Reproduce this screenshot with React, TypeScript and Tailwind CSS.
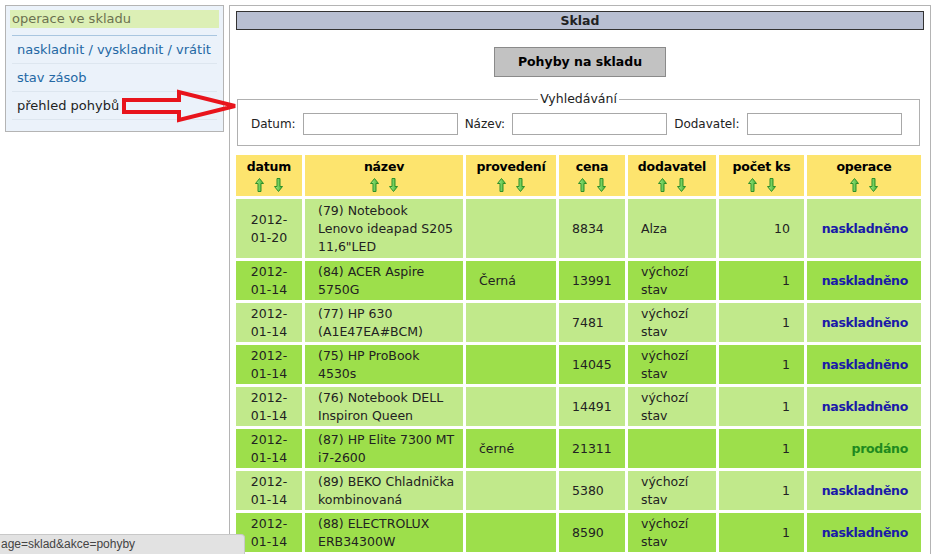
import React from 'react'

const font = { fontFamily: '"DejaVu Sans", Verdana, sans-serif' }

type Row = {
  datum: string[]
  nazev: string[]
  provedeni: string
  cena: string
  dodavatel: string[]
  pocet: string
  operace: 'naskladněno' | 'prodáno'
}

const rows: Row[] = [
  { datum: ['2012-', '01-20'], nazev: ['(79) Notebook', 'Lenovo ideapad S205', '11,6"LED'], provedeni: '', cena: '8834', dodavatel: ['Alza'], pocet: '10', operace: 'naskladněno' },
  { datum: ['2012-', '01-14'], nazev: ['(84) ACER Aspire', '5750G'], provedeni: 'Černá', cena: '13991', dodavatel: ['výchozí', 'stav'], pocet: '1', operace: 'naskladněno' },
  { datum: ['2012-', '01-14'], nazev: ['(77) HP 630', '(A1E47EA#BCM)'], provedeni: '', cena: '7481', dodavatel: ['výchozí', 'stav'], pocet: '1', operace: 'naskladněno' },
  { datum: ['2012-', '01-14'], nazev: ['(75) HP ProBook', '4530s'], provedeni: '', cena: '14045', dodavatel: ['výchozí', 'stav'], pocet: '1', operace: 'naskladněno' },
  { datum: ['2012-', '01-14'], nazev: ['(76) Notebook DELL', 'Inspiron Queen'], provedeni: '', cena: '14491', dodavatel: ['výchozí', 'stav'], pocet: '1', operace: 'naskladněno' },
  { datum: ['2012-', '01-14'], nazev: ['(87) HP Elite 7300 MT', 'i7-2600'], provedeni: 'černé', cena: '21311', dodavatel: [], pocet: '1', operace: 'prodáno' },
  { datum: ['2012-', '01-14'], nazev: ['(89) BEKO Chladnička', 'kombinovaná'], provedeni: '', cena: '5380', dodavatel: ['výchozí', 'stav'], pocet: '1', operace: 'naskladněno' },
  { datum: ['2012-', '01-14'], nazev: ['(88) ELECTROLUX', 'ERB34300W'], provedeni: '', cena: '8590', dodavatel: ['výchozí', 'stav'], pocet: '1', operace: 'naskladněno' },
  { datum: ['2012-', '01-14'], nazev: ['(90) ELECTROLUX', 'EWT 10120W'], provedeni: '', cena: '6290', dodavatel: ['výchozí', 'stav'], pocet: '1', operace: 'naskladněno' },
]

function SortArrow({ down }: { down?: boolean }) {
  const id = down ? 'gd' : 'gu'
  return (
    <svg width="9" height="14" viewBox="0 0 9 14">
      <defs>
        <linearGradient id={id} x1="0" y1="0" x2="1" y2="0">
          <stop offset="0" stopColor="#a8f08c" />
          <stop offset="1" stopColor="#3fae2f" />
        </linearGradient>
      </defs>
      <path
        d={down ? 'M4.5 13.5 L8.5 8.5 L6 8.5 L6 0.5 L3 0.5 L3 8.5 L0.5 8.5 Z' : 'M4.5 0.5 L8.5 5.5 L6 5.5 L6 13.5 L3 13.5 L3 5.5 L0.5 5.5 Z'}
        fill={`url(#${id})`}
        stroke="#2f8f2a"
        strokeWidth="1"
        strokeLinejoin="round"
      />
    </svg>
  )
}

function Th({ label }: { label: string }) {
  return (
    <th className="bg-[#fde46e] px-1 pt-[4px] pb-[4px] text-center align-top font-bold text-[12.5px] leading-[16px] tracking-[-0.2px] text-black">
      <div>{label}</div>
      <div className="mt-[3px] flex justify-center gap-[10px]">
        <SortArrow />
        <SortArrow down />
      </div>
    </th>
  )
}

export default function App() {
  return (
    <div className="relative min-h-[554px] bg-white text-[12px] text-[#222]" style={font}>
      <div className="flex items-start">
        {/* sidebar */}
        <div className="ml-[5px] mt-[5px] w-[219px] border border-[#b4b4b4] bg-[#ebf2fa] px-[4px] pt-[4px] pb-[11px] text-[13px]">
          <div className="bg-[#dcefb5] px-[2px] leading-[18px] text-[#6b7150]">operace ve skladu</div>
          <div className="mt-[7px] mx-[2px] border-t border-[#a9c6e0]" />
          <ul className="mx-[2px]">
            <li className="border-b border-[#dde6ef] pl-[5px] pt-[5px] pb-[4px] leading-[18px] text-[#2468a4]">naskladnit / vyskladnit / vrátit</li>
            <li className="border-b border-[#dde6ef] pl-[5px] pt-[5px] pb-[4px] leading-[18px] text-[#2468a4]">stav zásob</li>
            <li className="border-b border-[#dde6ef] pl-[5px] pt-[5px] pb-[4px] leading-[18px] text-[#222]">přehled pohybů</li>
          </ul>
        </div>

        {/* main */}
        <div className="ml-[5px] mt-[5px] w-[702px] min-h-[600px] border border-[#b4b4b4] border-b-0 px-[6px] pt-[5px]">
          <div className="border border-[#333] bg-[#b8bfd2] text-center font-bold text-[12.5px] leading-[17px]">Sklad</div>

          <div className="mt-[17px] flex justify-center">
            <button className="h-[30px] w-[172px] border border-[#8a8a8a] bg-[#c2c2c2] font-bold text-[12.5px] text-black">Pohyby na skladu</button>
          </div>

          <fieldset className="mx-[1px] mr-[4px] mt-[14px] border border-[#b0b0b0] px-[13px] pb-[10px]">
            <legend className="mx-auto px-[2px] text-[12.5px] leading-[16px] text-[#222]">Vyhledávání</legend>
            <div className="mt-[6px] flex items-center">
              <span>Datum:</span>
              <input className="ml-[7px] h-[22px] w-[155px] border border-[#a8a8a8] bg-white" />
              <span className="ml-[7px]">Název:</span>
              <input className="ml-[7px] h-[22px] w-[155px] border border-[#a8a8a8] bg-white" />
              <span className="ml-[7px]">Dodavatel:</span>
              <input className="ml-[7px] h-[22px] w-[155px] border border-[#a8a8a8] bg-white" />
            </div>
          </fieldset>

          <table className="mt-[6px] border-separate border-spacing-[3px] -mx-[3px] text-[12.5px]" style={{ width: 'calc(100% + 3px)' }}>
            <colgroup>
              <col className="w-[66px]" />
              <col className="w-[158px]" />
              <col className="w-[90px]" />
              <col className="w-[66px]" />
              <col className="w-[88px]" />
              <col className="w-[85px]" />
              <col />
            </colgroup>
            <thead>
              <tr>
                <Th label="datum" />
                <Th label="název" />
                <Th label="provedení" />
                <Th label="cena" />
                <Th label="dodavatel" />
                <Th label="počet ks" />
                <Th label="operace" />
              </tr>
            </thead>
            <tbody>
              {rows.map((r, i) => {
                const bg = i % 2 === 0 ? 'bg-[#c1e98b]' : 'bg-[#9ddf4b]'
                const pad = i === 0 ? 'pt-[3px] pb-[2px]' : 'pt-[2px] pb-[1px]'
                return (
                  <tr key={i} className="leading-[18px]">
                    <td className={`${bg} ${pad} text-center`}>{r.datum.map((l) => <div key={l}>{l}</div>)}</td>
                    <td className={`${bg} ${pad} pl-[13px] pr-1`}>{r.nazev.map((l) => <div key={l}>{l}</div>)}</td>
                    <td className={`${bg} ${pad} pl-[13px]`}>{r.provedeni}</td>
                    <td className={`${bg} ${pad} pl-[13px]`}>{r.cena}</td>
                    <td className={`${bg} ${pad} pl-[13px]`}>{r.dodavatel.map((l) => <div key={l}>{l}</div>)}</td>
                    <td className={`${bg} ${pad} pr-[14px] text-right`}>{r.pocet}</td>
                    <td className={`${bg} ${pad} pr-[13px] text-right font-bold tracking-[-0.3px] ${r.operace === 'prodáno' ? 'text-[#1f8a1f]' : 'text-[#1a1aa8]'}`}>
                      {r.operace}
                    </td>
                  </tr>
                )
              })}
            </tbody>
          </table>
        </div>
      </div>

      {/* red annotation arrow */}
      <svg className="absolute left-[120px] top-[88px]" width="120" height="36" viewBox="0 0 120 36">
        <path
          d="M4 12 L59 12 L59 4 L115 18 L59 32 L59 24 L4 24 Z"
          fill="none"
          stroke="#e8141c"
          strokeWidth="4"
          strokeLinejoin="miter"
        />
      </svg>

      {/* status bar */}
      <div
        className="fixed bottom-0 left-0 h-[20px] w-[245px] rounded-tr-[4px] border-t border-r border-[#c8c8c8] bg-[#e2e2e2] pl-[1px] text-[12px] leading-[19px] text-[#444]"
        style={{ fontFamily: '"Liberation Sans", Arial, sans-serif' }}
      >
        age=sklad&amp;akce=pohyby
      </div>
    </div>
  )
}
